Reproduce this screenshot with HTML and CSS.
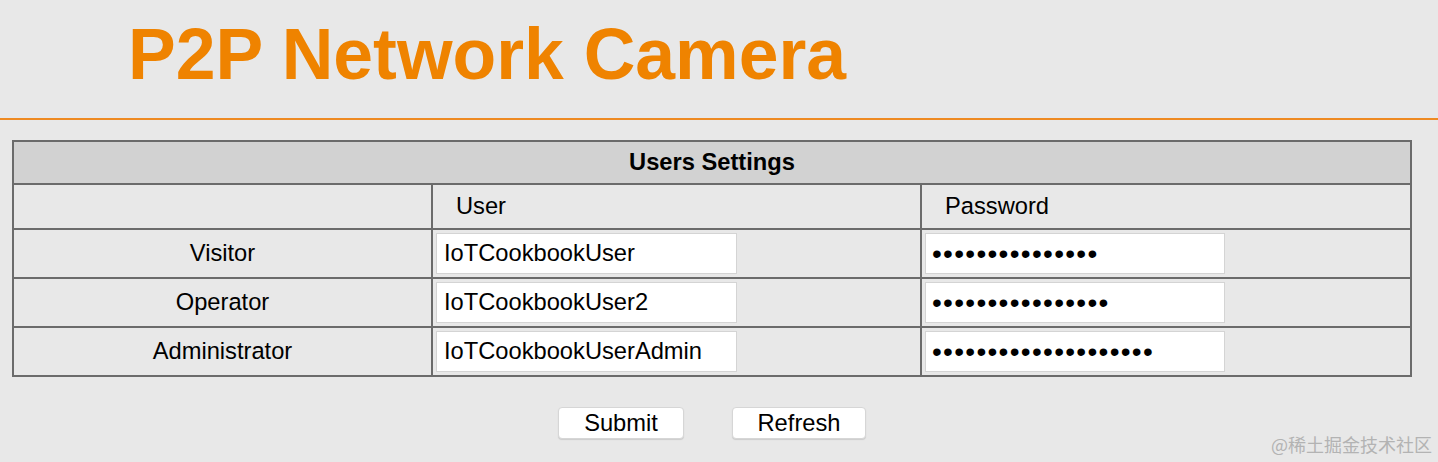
FILE: index.html
```html
<!DOCTYPE html>
<html lang="en">
<head>
<meta charset="utf-8">
<title>P2P Network Camera - Users Settings</title>
<link rel="stylesheet" href="styles.css">
</head>
<body>
<header class="masthead">
  <h1 class="brand">P2P Network Camera</h1>
</header>
<main class="content">
  <form class="users-form">
    <table class="users">
      <colgroup>
        <col class="col-role">
        <col class="col-user">
        <col class="col-pass">
      </colgroup>
      <thead>
        <tr class="title-row"><th colspan="3">Users Settings</th></tr>
        <tr class="head-row"><th></th><th class="col-head">User</th><th class="col-head">Password</th></tr>
      </thead>
      <tbody>
        <tr class="user-row">
          <td class="role">Visitor</td>
          <td class="field"><input class="text-input" type="text" value="IoTCookbookUser"></td>
          <td class="field"><input class="text-input pass-input" type="password" value="abcdefghijklmno"></td>
        </tr>
        <tr class="user-row">
          <td class="role">Operator</td>
          <td class="field"><input class="text-input" type="text" value="IoTCookbookUser2"></td>
          <td class="field"><input class="text-input pass-input" type="password" value="abcdefghijklmnop"></td>
        </tr>
        <tr class="user-row">
          <td class="role">Administrator</td>
          <td class="field"><input class="text-input" type="text" value="IoTCookbookUserAdmin"></td>
          <td class="field"><input class="text-input pass-input" type="password" value="abcdefghijklmnopqrst"></td>
        </tr>
      </tbody>
    </table>
    <div class="actions">
      <button type="button" class="btn btn-submit">Submit</button>
      <button type="button" class="btn btn-refresh">Refresh</button>
    </div>
  </form>
</main>
<div class="watermark">@稀土掘金技术社区</div>
</body>
</html>
```
FILE: styles.css
```css
html, body {
  margin: 0;
  padding: 0;
}
body {
  background: #e8e8e8;
  font-family: "Liberation Sans", Arial, Helvetica, sans-serif;
  color: #000;
  min-height: 462px;
  position: relative;
}
.masthead {
  padding: 18px 0 28px 128px;
  border-bottom: 2px solid #ee8a22;
}
.brand {
  margin: 0;
  font-size: 71.5px;
  line-height: 72px;
  font-weight: bold;
  color: #ef8300;
}
.content {
  padding: 20px 0 0 12px;
}
.users-form {
  margin: 0;
  width: 1400px;
}
.users {
  width: 1400px;
  table-layout: fixed;
  border-collapse: collapse;
  border: 2px solid #6b6b6b;
  font-size: 23.7px;
}
.col-role { width: 419px; }
.col-user { width: 489px; }
.col-pass { width: 490px; }
.users th,
.users td {
  border: 2px solid #6b6b6b;
  padding: 0;
  vertical-align: middle;
}
.users .title-row th {
  height: 41px;
  background: #d2d2d2;
  font-weight: bold;
  text-align: center;
}
.users .head-row th {
  height: 43px;
  font-weight: normal;
  text-align: left;
}
.users .head-row .col-head {
  padding-left: 23px;
}
.users .user-row td {
  height: 47px;
}
.users .role {
  text-align: center;
}
.users .field {
  padding-left: 3px;
}
.text-input {
  display: block;
  box-sizing: border-box;
  width: 301px;
  height: 41px;
  margin: 0;
  padding: 0 7px;
  border: 1px solid #d4d4d4;
  background: #fff;
  font-family: "Liberation Sans", Arial, Helvetica, sans-serif;
  font-size: 23.7px;
  color: #000;
  outline: none;
}
.pass-input {
  width: 300px;
  padding-left: 6px;
  font-size: 28px;
  letter-spacing: 1.3px;
}
.actions {
  display: flex;
  justify-content: center;
  gap: 48px;
  margin-top: 30px;
}
.btn {
  box-sizing: border-box;
  height: 32px;
  padding: 0;
  border: 1px solid #d6d6d6;
  border-radius: 4px;
  background: #fff;
  box-shadow: 0 1px 1px rgba(0, 0, 0, 0.12);
  font-family: "Liberation Sans", Arial, Helvetica, sans-serif;
  font-size: 23.7px;
  line-height: 30px;
  color: #000;
}
.btn-submit { width: 126px; }
.btn-refresh { width: 134px; }
.watermark {
  position: absolute;
  right: 6px;
  bottom: 8px;
  font-family: "Noto Sans CJK SC", "Liberation Sans", sans-serif;
  font-size: 18px;
  line-height: 20px;
  color: #b3b3b3;
}
```
